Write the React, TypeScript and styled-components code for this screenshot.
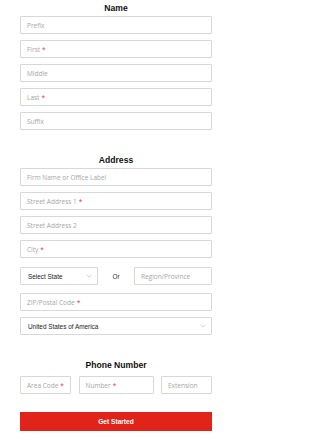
import React from 'react';
import styled, { createGlobalStyle } from 'styled-components';

const GlobalStyle = createGlobalStyle`
    html, body {
        margin: 0;
        padding: 0;
        background: #ffffff;
    }
    body {
        font-family: "Liberation Sans", Arial, sans-serif;
    }
`;

const Page = styled.div`
    width: 192px;
    margin-left: 20px;
    padding-top: 2px;
    display: flex;
    flex-direction: column;
`;

const Section = styled.section<{ top: number }>`
    display: flex;
    flex-direction: column;
    margin-top: ${props => props.top}px;
`;

const Heading = styled.h2<{ below: number }>`
    margin: 0 0 ${props => props.below}px 0;
    height: 12px;
    line-height: 12px;
    font-size: 8.6px;
    font-weight: 700;
    color: #111111;
    text-align: center;
    font-family: "Liberation Sans", Arial, sans-serif;
`;

const Fields = styled.div`
    display: flex;
    flex-direction: column;
    gap: 6px;
`;

const Box = styled.div`
    box-sizing: border-box;
    height: 18px;
    border: 1px solid #d8d8d8;
    border-radius: 1px;
    background: #ffffff;
    display: flex;
    align-items: center;
    padding: 0 6px;
    min-width: 0;
`;

const Hint = styled.span`
    font-family: "Open Sans", "Noto Sans", sans-serif;
    font-size: 6.5px;
    color: #a6a6a6;
    white-space: nowrap;
`;

const Star = styled.span`
    color: #e53935;
    margin-left: 2px;
`;

const SelectBox = styled(Box)`
    justify-content: space-between;
    padding: 0 5px 0 7px;
`;

const SelectText = styled.span`
    font-family: "Liberation Sans", Arial, sans-serif;
    font-size: 6.4px;
    color: #222222;
    white-space: nowrap;
`;

const StateRow = styled.div`
    display: grid;
    grid-template-columns: 78px 1fr 78px;
    align-items: center;
    margin: 3px 0 2px;
`;

const Or = styled.span`
    text-align: center;
    font-family: "Liberation Sans", Arial, sans-serif;
    font-size: 6.4px;
    color: #333333;
`;

const PhoneRow = styled.div`
    display: grid;
    grid-template-columns: 51px 1fr 51px;
    gap: 7.5px;
`;

const Button = styled.button`
    margin-top: 18px;
    height: 19px;
    border: none;
    border-radius: 0;
    background: #e2231a;
    color: #ffffff;
    font-family: "Liberation Sans", Arial, sans-serif;
    font-size: 6.6px;
    font-weight: 700;
    padding: 0;
    cursor: pointer;
`;

const Chevron: React.FC = () => (
    <svg width="6" height="4" viewBox="0 0 6 4" fill="none">
        <path d="M0.6 0.8 L3 3 L5.4 0.8" stroke="#c4c4c4" strokeWidth="0.7" />
    </svg>
);

const Field: React.FC<{ hint: string; required?: boolean }> = ({ hint, required }) => (
    <Box>
        <Hint>
            {hint}
            {required && <Star>*</Star>}
        </Hint>
    </Box>
);

const Select: React.FC<{ value: string }> = ({ value }) => (
    <SelectBox>
        <SelectText>{value}</SelectText>
        <Chevron />
    </SelectBox>
);

export default function App() {
    return (
        <>
            <GlobalStyle />
            <Page>
                <Section top={0}>
                    <Heading below={2}>Name</Heading>
                    <Fields>
                        <Field hint="Prefix" />
                        <Field hint="First" required />
                        <Field hint="Middle" />
                        <Field hint="Last" required />
                        <Field hint="Suffix" />
                    </Fields>
                </Section>

                <Section top={24}>
                    <Heading below={2}>Address</Heading>
                    <Fields>
                        <Field hint="Firm Name or Office Label" />
                        <Field hint="Street Address 1" required />
                        <Field hint="Street Address 2" />
                        <Field hint="City" required />
                        <StateRow>
                            <Select value="Select State" />
                            <Or>Or</Or>
                            <Field hint="Region/Province" />
                        </StateRow>
                        <Field hint="ZIP/Postal Code" required />
                        <Select value="United States of America" />
                    </Fields>
                </Section>

                <Section top={24}>
                    <Heading below={5}>Phone Number</Heading>
                    <PhoneRow>
                        <Field hint="Area Code" required />
                        <Field hint="Number" required />
                        <Field hint="Extension" />
                    </PhoneRow>
                </Section>

                <Button>Get Started</Button>
            </Page>
        </>
    );
}
